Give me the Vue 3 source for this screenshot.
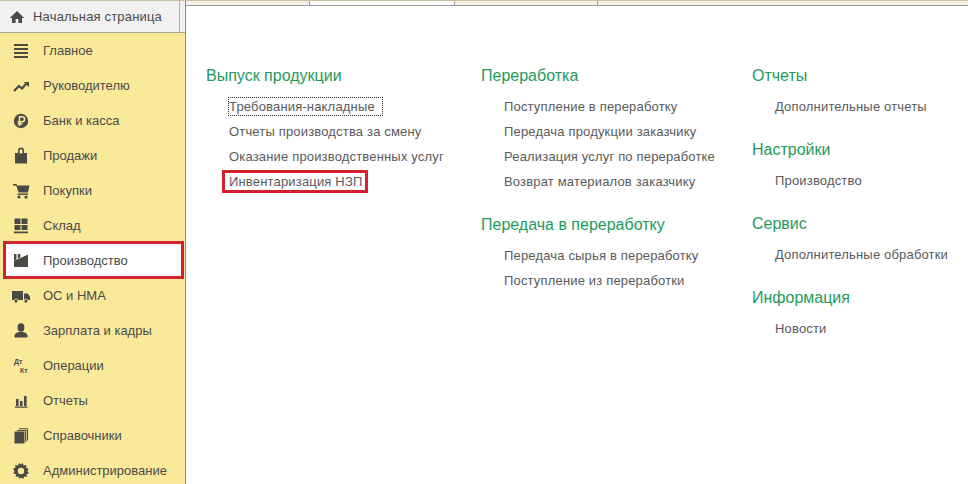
<script setup>
const menu = [
  { label: 'Главное', icon: 'menu' },
  { label: 'Руководителю', icon: 'trend' },
  { label: 'Банк и касса', icon: 'ruble' },
  { label: 'Продажи', icon: 'bag' },
  { label: 'Покупки', icon: 'cart' },
  { label: 'Склад', icon: 'store' },
  { label: 'Производство', icon: 'factory', active: true },
  { label: 'ОС и НМА', icon: 'truck' },
  { label: 'Зарплата и кадры', icon: 'user' },
  { label: 'Операции', icon: 'dtkt' },
  { label: 'Отчеты', icon: 'bars' },
  { label: 'Справочники', icon: 'books' },
  { label: 'Администрирование', icon: 'gear' },
]
const columns = [
  { width: 275, groups: [{ title: 'Выпуск продукции', links: [
    { t: 'Требования-накладные', focus: true },
    { t: 'Отчеты производства за смену' },
    { t: 'Оказание производственных услуг' },
    { t: 'Инвентаризация НЗП', mark: true },
  ] }] },
  { width: 271, groups: [
    { title: 'Переработка', links: [
      { t: 'Поступление в переработку' },
      { t: 'Передача продукции заказчику' },
      { t: 'Реализация услуг по переработке' },
      { t: 'Возврат материалов заказчику' },
    ] },
    { title: 'Передача в переработку', links: [
      { t: 'Передача сырья в переработку' },
      { t: 'Поступление из переработки' },
    ] },
  ] },
  { width: 216, groups: [
    { title: 'Отчеты', links: [{ t: 'Дополнительные отчеты' }] },
    { title: 'Настройки', links: [{ t: 'Производство' }] },
    { title: 'Сервис', links: [{ t: 'Дополнительные обработки' }] },
    { title: 'Информация', links: [{ t: 'Новости' }] },
  ] },
]
</script>

<template>
  <div class="page">
    <div class="topline"></div>
    <div class="body">
      <aside class="side">
        <div class="home">
          <svg class="home-ic" width="16" height="14" viewBox="0 0 16 14"><path d="M8 1 0.8 8H3v5h3.600V9h2.800v4H13V8h2.200z" fill="#4b4b4b"/></svg>
          <span>Начальная страница</span>
          <i class="home-sep"></i>
        </div>
        <nav class="menu">
          <div v-for="m in menu" :key="m.label" class="item" :class="{ active: m.active }">
            <svg class="ic" width="20" height="20" viewBox="0 0 20 20" fill="#4a4a44">
              <template v-if="m.icon === 'menu'"><path d="M3 3h14v2H3zM3 7h14v2H3zM3 11h14v2H3zM3 15h14v2H3z"/></template>
              <template v-else-if="m.icon === 'trend'"><path d="M3 15l5-5 3 2.500 4-4.500" fill="none" stroke="#4a4a44" stroke-width="2.200"/><path d="M12.500 6H18v5z"/></template>
              <template v-else-if="m.icon === 'ruble'"><circle cx="10" cy="10" r="7.200"/><path d="M8.500 15V5.800h2.600a2.500 2.500 0 0 1 0 5H6.800M6.800 12.800h4.600" fill="none" stroke="#fbe99a" stroke-width="1.500"/></template>
              <template v-else-if="m.icon === 'bag'"><path d="M4 7h3V4.500a3 3 0 0 1 6 0V7h3v10.500H4z"/><path d="M8.600 7.500V4.600a1.400 1.400 0 0 1 2.800 0v2.900z" fill="#fbe99a"/></template>
              <template v-else-if="m.icon === 'cart'"><path d="M2 3h3.500l.6 1.500H18.500l-1.600 7H7.500L5.400 5 4 4.600H2z"/><rect x="6.500" y="12.500" width="10.500" height="1.400"/><circle cx="8" cy="16" r="1.600"/><circle cx="15" cy="16" r="1.600"/></template>
              <template v-else-if="m.icon === 'store'"><path d="M3.500 2.500h6v5.500h-6zM10.500 2.500h6v5.500h-6zM3.500 9h6v5h-6zM10.500 9h6v5h-6zM3 15.500h14v1.800H3z"/></template>
              <template v-else-if="m.icon === 'factory'"><path d="M3 17V11l14-6.500V17zM3 4h2.500v5.500L3 10.700zM6.800 4h2.500v3.500L6.800 8.700z"/></template>
              <template v-else-if="m.icon === 'truck'"><path d="M1 5h11v9H1zM13 7.500h3.500L19 10.500V14h-6z"/><circle cx="5" cy="15" r="2" stroke="#fbe99a" stroke-width=".8"/><circle cx="15" cy="15" r="2" stroke="#fbe99a" stroke-width=".8"/></template>
              <template v-else-if="m.icon === 'user'"><ellipse cx="10" cy="6.500" rx="3.400" ry="4.200"/><path d="M3.500 16.500v-2c0-2 2.500-2.800 4.500-3.500h4c2 .7 4.500 1.500 4.500 3.500v2z"/></template>
              <template v-else-if="m.icon === 'dtkt'"><text x="3" y="8" class="dk">Дт</text><text x="9" y="17" class="dk">Кт</text></template>
              <template v-else-if="m.icon === 'bars'"><path d="M5 8h2.600v7H5zM9 10h2.600v5H9zM13 5h2.600v10H13zM4 15.500h12.500v1.300H4z"/></template>
              <template v-else-if="m.icon === 'books'"><path d="M3.500 5.500h10v12h-10z"/><path d="M14.700 4.500V16M16.500 2.700V14.500M6 4.500h8.700M8 2.700h8.500" fill="none" stroke="#4a4a44" stroke-width="1.100"/></template>
              <template v-else><path d="M10 3.500l1.800-1.500.8 2.600 2.900-.7-.6 2.900 2.600.8L16.500 10l1.500 2.400-2.600.8.6 2.900-2.900-.7-.8 2.600L10 16.500 8.200 18l-.8-2.600-2.900.7.6-2.900-2.600-.8L3.500 10 2 7.600l2.600-.8-.6-2.900 2.900.7L8.200 2z"/><circle cx="10" cy="10" r="3.200" fill="#fbe99a"/></template>
            </svg>
            <span>{{ m.label }}</span>
          </div>
        </nav>
      </aside>
      <main class="content">
        <div class="tabs">
          <i class="tab beige w1"></i><i class="tab w2"></i><i class="tab beige w3"></i><i class="tab beige grow"></i>
        </div>
        <div class="cols">
          <section v-for="(c, i) in columns" :key="i" class="col" :style="{ width: c.width + 'px' }">
            <div v-for="g in c.groups" :key="g.title" class="group">
              <h3>{{ g.title }}</h3>
              <a v-for="l in g.links" :key="l.t" class="link" :class="{ focus: l.focus, mark: l.mark }">{{ l.t }}</a>
            </div>
          </section>
        </div>
      </main>
    </div>
  </div>
</template>

<style>
html, body { margin: 0; background: #fff; }
</style>

<style scoped>
.page { width: 968px; height: 484px; overflow: hidden; font-family: "Liberation Sans", Arial, sans-serif; position: relative; background: #fff; }
.topline { height: 1px; background: #c9c0a0; }
.body { display: flex; height: 483px; }
.side { width: 186px; flex: none; box-sizing: border-box; border-right: 1px solid #8a8a80; background: #fbe99a; }
.home { height: 32px; box-sizing: border-box; background: #f1f1f1; border-bottom: 1px solid #a8a898; display: flex; align-items: center; padding-left: 9px; gap: 8px; font-size: 13px; color: #4a4a4a; letter-spacing: .18px; position: relative; }
.home-sep { position: absolute; left: 179px; top: 0; bottom: 0; width: 1px; background: #b4b0a0; }
.item { height: 35px; display: flex; align-items: center; padding-left: 11px; gap: 12px; font-size: 13px; color: #4a4a4a; box-sizing: border-box; }
.item.active { background: #fff; margin: -2px 1px -1px 3px; border: 3px solid #d2202c; padding-left: 5px; height: 38px; }
.ic { flex: none; }
.dk { font-size: 7px; font-weight: bold; fill: #4a4a44; }
.content { flex: 1; position: relative; min-width: 0; }
.tabs { height: 5px; box-sizing: border-box; border-bottom: 1px solid #9a9aa4; display: flex; }
.tab { display: block; height: 4px; box-sizing: border-box; border-right: 1px solid #9a9aa4; flex: none; }
.beige { background: #f4f0e6; }
.w1 { width: 124px; }
.w2 { width: 145px; }
.w3 { width: 143px; }
.grow { flex: 1; border-right: 0; }
.cols { display: flex; padding: 60px 0 0 20px; }
.col { flex: none; }
.group { margin-bottom: 25px; }
h3 { margin: 0 0 12px; height: 20px; font-size: 16px; line-height: 20px; font-weight: normal; color: #1f9a5c; }
.link { display: block; width: max-content; font-size: 13px; line-height: 17px; color: #5a5a5a; margin: 0 0 8px 23px; letter-spacing: .17px; }
.focus { outline: 1px dotted #333; padding-right: 7px; }
.mark { outline: 3px solid #d2202c; padding: 0 3px 0 4px; margin-left: 19px; }
</style>
